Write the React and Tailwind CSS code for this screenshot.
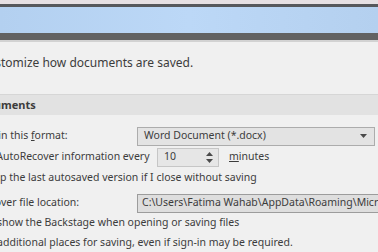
import React from 'react';

// Text whose start lies left of the visible area: the hidden part runs out leftwards.
function Cut({ hidden, children }) {
  return (
    <span className="whitespace-nowrap">
      <span className="inline-block w-0 [direction:rtl]">
        <span className="[direction:ltr] [unicode-bidi:isolate]">{hidden}</span>
      </span>
      {children}
    </span>
  );
}

function Triangle({ up }) {
  return (
    <svg width="7" height="4" viewBox="0 0 7 4" className="block">
      <path d={up ? 'M0 4 L3.5 0 L7 4 Z' : 'M0 0 L3.5 4 L7 0 Z'} fill="#4a4a4a" />
    </svg>
  );
}

export default function App() {
  return (
    <div
      className="w-[378px] h-[252px] overflow-hidden bg-[#f0f0f0] text-[#3c3c3c]"
      style={{ fontFamily: '"Noto Sans", "Open Sans", sans-serif' }}
    >
      {/* Window frame */}
      <div className="h-[4px] bg-[#e6e0e3]" />
      <div className="h-[3px] bg-[#56585c]" />
      <div className="h-[26px] bg-gradient-to-r from-[#b3d0f0] via-[#bcd8f7] to-[#b4d0ef]" />
      <div className="h-[7px] bg-[#626262]" />
      <div className="h-[2px] bg-[#d2d2d2]" />

      {/* Intro */}
      <div className="h-[42px] flex items-center pl-[1px] text-[12px]">
        <Cut hidden="Cus">tomize how documents are saved.</Cut>
      </div>

      {/* Section header */}
      <div className="mt-[10px] h-[21px] flex items-center pl-[1px] border-t border-[#d6d6d6] bg-[#e2e2e2] text-[11px] font-bold">
        <Cut hidden="Save docu">ments</Cut>
      </div>

      <div className="text-[10.5px]">
        {/* Format */}
        <div className="mt-[11px] h-[20px] flex items-center">
          <div className="w-[137px] shrink-0 pl-[1px]">
            <Cut hidden="Save files i">
              n this <span className="underline">f</span>ormat:
            </Cut>
          </div>
          <div className="w-[238px] h-[19px] shrink-0 flex items-center justify-between pl-[6px] pr-[7px] bg-[#e3e3e3] border border-[#acacac]">
            <span>Word Document (*.docx)</span>
            <Triangle />
          </div>
        </div>

        {/* AutoRecover interval */}
        <div className="h-[22px] flex items-center">
          <div className="w-[157px] shrink-0 pl-[3px]">
            <Cut hidden="Save A">utoRecover information every</Cut>
          </div>
          <div className="w-[62px] h-[19px] shrink-0 flex items-center justify-between pl-[6px] pr-[5px] bg-[#e6e6e6] border border-[#c6c6c6]">
            <span>10</span>
            <div className="flex flex-col gap-[3px]">
              <Triangle up />
              <Triangle />
            </div>
          </div>
          <span className="ml-[10px]">
            <span className="underline">m</span>inutes
          </span>
        </div>

        {/* Keep last version */}
        <div className="h-[20px] flex items-center">
          <Cut hidden="Kee">p the last autosaved version if I close without saving</Cut>
        </div>

        {/* Location */}
        <div className="mt-[4px] h-[22px] flex items-center">
          <div className="w-[137px] shrink-0 pl-[1px]">
            <Cut hidden="AutoReco">ver file location:</Cut>
          </div>
          <div className="w-[260px] h-[19px] shrink-0 flex items-center pl-[4px] whitespace-nowrap bg-[#dedede] border border-[#9c9c9c]">
            C:\Users\Fatima Wahab\AppData\Roaming\Microsoft\Word\
          </div>
        </div>

        {/* Backstage */}
        <div className="h-[18px] flex items-center pl-[2px]">
          <Cut hidden="Don't s">how the Backstage when opening or saving files</Cut>
        </div>

        {/* Additional places */}
        <div className="h-[22px] flex items-center pl-[3px]">
          <Cut hidden="Show a">dditional places for saving, even if sign-in may be required.</Cut>
        </div>
      </div>
    </div>
  );
}
